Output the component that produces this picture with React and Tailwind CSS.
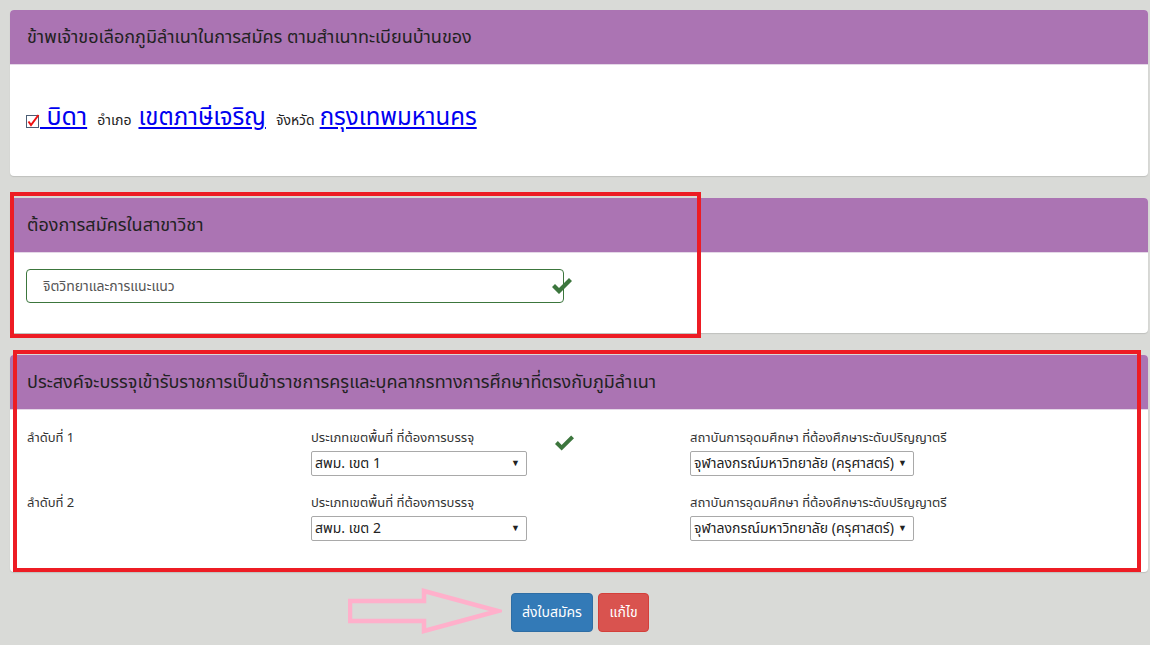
import React from "react";

const Check = ({ className }) => (
    <svg viewBox="0 0 20 16" className={className}>
        <polygon points="0,9 3,6 7,10 17,0 20,3 7,16" fill="#3c763d" />
    </svg>
);

const FakeSelect = ({ value, className }) => (
    <div className={"h-[25px] border border-[#a9a9a9] rounded-[2px] bg-white flex items-center justify-between pl-[3px] pr-[6px] text-[14px] text-[#222] " + className}>
        <span>{value}</span>
        <span className="text-[9px] ml-[4px]">▼</span>
    </div>
);

const Header = ({ children }) => (
    <div className="h-[55px] bg-[#ab74b3] rounded-t-[4px] border-b border-[#e4d7e7] px-[17px] flex items-center text-[18px] text-[#222]">
        {children}
    </div>
);

const rows = [
    { n: 1, zone: "สพม. เขต 1" },
    { n: 2, zone: "สพม. เขต 2" },
];

export default function App() {
    return (
        <div className="relative min-h-[645px] bg-[#d9dad7] pt-[10px] pl-[10px] pr-[2px] font-['Noto_Sans_Thai','Noto_Sans','Liberation_Sans',sans-serif] text-[#333]">
            {/* panel 1 */}
            <div className="bg-white rounded-[4px] shadow-[0_1px_1px_rgba(0,0,0,0.12)]">
                <Header>ข้าพเจ้าขอเลือกภูมิลำเนาในการสมัคร ตามสำเนาทะเบียนบ้านของ</Header>
                <div className="h-[111px] flex items-center pl-[16px] pb-[6px]">
                    <svg viewBox="0 0 14 14" className="w-[14px] h-[14px] mt-[6px]">
                        <rect x="0.5" y="1.5" width="12" height="12" fill="#fff" stroke="#4b5d74" />
                        <polyline points="2.5,7.5 5,11 12.5,1" fill="none" stroke="#e11" strokeWidth="2" />
                    </svg>
                    <div className="flex items-baseline">
                        <a className="text-[25px] text-[#0000f0] underline">&nbsp;บิดา</a>
                        <span className="text-[14px] text-[#222] ml-[10px]">อำเภอ</span>
                        <a className="text-[24px] text-[#0000f0] underline ml-[7px]">เขตภาษีเจริญ</a>
                        <span className="text-[14px] text-[#222] ml-[10px]">จังหวัด</span>
                        <a className="text-[24px] text-[#0000f0] underline ml-[5px]">กรุงเทพมหานคร</a>
                    </div>
                </div>
            </div>

            {/* panel 2 */}
            <div className="mt-[22px] bg-white rounded-[4px] shadow-[0_1px_1px_rgba(0,0,0,0.12)]">
                <Header>ต้องการสมัครในสาขาวิชา</Header>
                <div className="h-[80px] pt-[16px] pl-[16px]">
                    <div className="relative w-[538px]">
                        <div className="h-[34px] border border-[#3c763d] rounded-[4px] flex items-center pl-[16px] text-[14px] text-[#555]">
                            จิตวิทยาและการแนะแนว
                        </div>
                        <Check className="absolute left-[526px] top-[9px] w-[20px] h-[16px]" />
                    </div>
                </div>
            </div>

            {/* panel 3 */}
            <div className="mt-[22px] bg-white rounded-[4px] shadow-[0_1px_1px_rgba(0,0,0,0.12)]">
                <Header>ประสงค์จะบรรจุเข้ารับราชการเป็นข้าราชการครูและบุคลากรทางการศึกษาที่ตรงกับภูมิลำเนา</Header>
                <div className="h-[162px] pt-[18px] pl-[17px] text-[13px]">
                    {rows.map((r) => (
                        <div key={r.n} className="grid grid-cols-[284px_379px_1fr] mb-[17px]">
                            <div className="leading-[20px]">ลำดับที่ {r.n}</div>
                            <div className="flex">
                                <div className="w-[216px]">
                                    <div className="leading-[20px] mb-[3px]">ประเภทเขตพื้นที่ ที่ต้องการบรรจุ</div>
                                    <FakeSelect value={r.zone} className="w-[216px]" />
                                </div>
                                {r.n === 1 && <Check className="ml-[28px] mt-[7px] w-[19px] h-[16px]" />}
                            </div>
                            <div>
                                <div className="leading-[20px] mb-[3px]">สถาบันการอุดมศึกษา ที่ต้องศึกษาระดับปริญญาตรี</div>
                                <FakeSelect value="จุฬาลงกรณ์มหาวิทยาลัย (ครุศาสตร์)" className="w-[224px]" />
                            </div>
                        </div>
                    ))}
                </div>
            </div>

            {/* buttons */}
            <div className="mt-[21px] flex justify-center gap-[5px] pl-[2px]">
                <button className="h-[39px] w-[82px] rounded-[4px] bg-[#337ab7] border border-[#2e6da4] text-white text-[14px]">ส่งใบสมัคร</button>
                <button className="h-[39px] w-[51px] rounded-[4px] bg-[#d9534f] border border-[#d43f3a] text-white text-[14px]">แก้ไข</button>
            </div>

            {/* annotations */}
            <div className="absolute left-[10px] top-[192px] w-[691px] h-[146px] border-[4px] border-[#ed1c24]" />
            <div className="absolute left-[13px] top-[350px] w-[1128px] h-[222px] border-[4px] border-[#ed1c24]" />
            <svg className="absolute left-[348px] top-[588px] w-[154px] h-[47px]" viewBox="0 0 154 47">
                <polygon points="2,13 76,13 76,3 150,23 76,43 76,33 2,33" fill="none" stroke="#ffb0cb" strokeWidth="4.5" />
            </svg>
        </div>
    );
}
